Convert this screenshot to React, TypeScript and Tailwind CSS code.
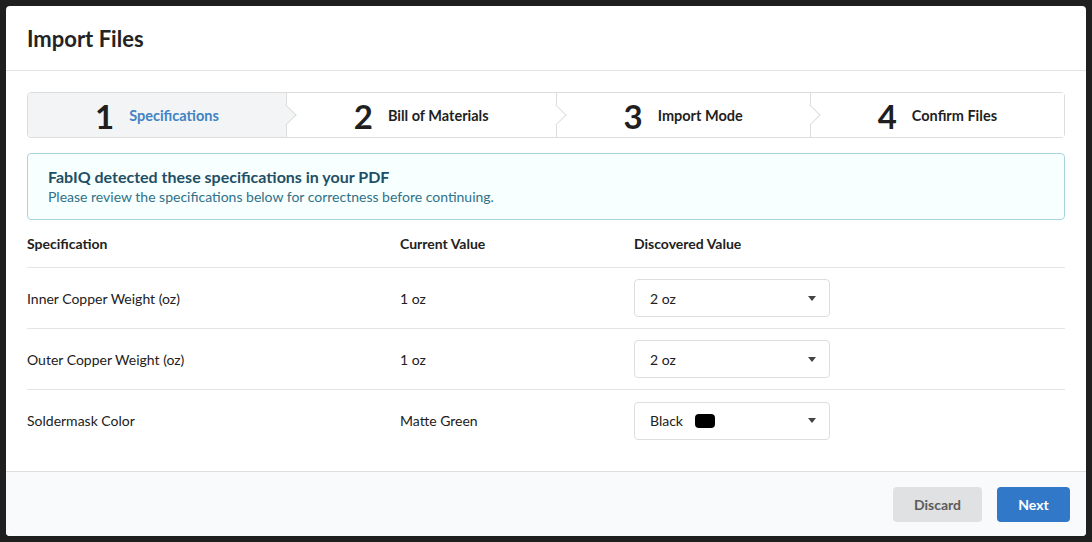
import React from 'react';

type Step = { n: number; title: string };

const steps: Step[] = [
  { n: 1, title: 'Specifications' },
  { n: 2, title: 'Bill of Materials' },
  { n: 3, title: 'Import Mode' },
  { n: 4, title: 'Confirm Files' },
];

const rows = [
  { spec: 'Inner Copper Weight (oz)', current: '1 oz', found: '2 oz', swatch: false },
  { spec: 'Outer Copper Weight (oz)', current: '1 oz', found: '2 oz', swatch: false },
  { spec: 'Soldermask Color', current: 'Matte Green', found: 'Black', swatch: true },
];

function Steps() {
  return (
    <div className="flex h-[46px] rounded-[4px] border border-[#dcdcdd]">
      {steps.map((s, i) => {
        const active = i === 0;
        const last = i === steps.length - 1;
        return (
          <div
            key={s.n}
            className={`relative flex flex-[1_0_auto] items-center justify-center gap-[15px] pt-[2px] ${
              last ? '' : 'border-r border-[#dcdcdd]'
            } ${active ? 'bg-[#f3f4f5] rounded-l-[4px]' : 'bg-white'}`}
          >
            <span className="text-[33px] font-bold leading-none text-[#1f1f1f]">{s.n}</span>
            <span
              className={`text-[14.5px] font-bold ${active ? 'text-[#4183c4]' : 'text-[#1f1f1f]'}`}
            >
              {s.title}
            </span>
            {!last && (
              <span
                className={`absolute right-0 top-1/2 z-10 h-[15px] w-[15px] translate-x-1/2 -translate-y-1/2 -rotate-45 border-b border-r border-[#dcdcdd] ${
                  active ? 'bg-[#f3f4f5]' : 'bg-white'
                }`}
              />
            )}
          </div>
        );
      })}
    </div>
  );
}

function Dropdown({ value, swatch }: { value: string; swatch: boolean }) {
  return (
    <div className="flex h-[38px] w-[196px] items-center justify-between rounded-[4px] border border-[#dedede] pl-[15px] pr-[13px]">
      <span className="flex items-center gap-[12px]">
        {value}
        {swatch && <span className="h-[14px] w-[20px] rounded-[4px] bg-black" />}
      </span>
      <svg width="8" height="5" viewBox="0 0 8 5">
        <path d="M0 0h8L4 5z" fill="#444" />
      </svg>
    </div>
  );
}

export default function App() {
  return (
    <div
      className="h-screen bg-[#1f1f1f] p-[6px]"
      style={{ fontFamily: 'Lato, "Open Sans", sans-serif' }}
    >
      <div className="flex h-full flex-col overflow-hidden rounded-[4px] bg-white text-[14px] text-[#212121]">
        <div className="flex h-[65px] shrink-0 items-center border-b border-[#e2e2e2] px-[21px]">
          <h1 className="text-[22px] font-bold text-[#232323]">Import Files</h1>
        </div>

        <div className="flex-1 px-[21px] pt-[21px]">
          <Steps />

          <div className="mt-[15px] h-[67px] rounded-[4px] border border-[#a9d5de] bg-[#f8ffff] px-[20px] pt-[13px] text-[#276f86]">
            <div className="text-[16px] font-bold leading-[20px] text-[#1e4f66]">
              FabIQ detected these specifications in your PDF
            </div>
            <div className="text-[14px] leading-[19px] text-[#2f7189]">
              Please review the specifications below for correctness before continuing.
            </div>
          </div>

          <div className="grid grid-cols-[373px_234px_1fr]">
            <div className="contents font-bold">
              <div className="flex h-[48px] items-center border-b border-[#e4e4e4]">Specification</div>
              <div className="flex h-[48px] items-center border-b border-[#e4e4e4]">Current Value</div>
              <div className="flex h-[48px] items-center border-b border-[#e4e4e4]">Discovered Value</div>
            </div>
            {rows.map((r, i) => {
              const line = i < rows.length - 1 ? 'border-b border-[#e4e4e4]' : '';
              return (
                <div key={r.spec} className="contents">
                  <div className={`flex h-[61px] items-center ${line}`}>{r.spec}</div>
                  <div className={`flex h-[61px] items-center ${line}`}>{r.current}</div>
                  <div className={`flex h-[61px] items-center ${line}`}>
                    <Dropdown value={r.found} swatch={r.swatch} />
                  </div>
                </div>
              );
            })}
          </div>
        </div>

        <div className="flex h-[65px] shrink-0 items-center justify-end gap-[15px] border-t border-[#dedede] bg-[#f9fafb] pr-[16px]">
          <button className="h-[35px] w-[89px] rounded-[4px] bg-[#e0e1e2] text-[14px] font-bold text-[#5c5c5c]">
            Discard
          </button>
          <button className="h-[35px] w-[73px] rounded-[4px] bg-[#3179c8] text-[14px] font-bold text-white">
            Next
          </button>
        </div>
      </div>
    </div>
  );
}
